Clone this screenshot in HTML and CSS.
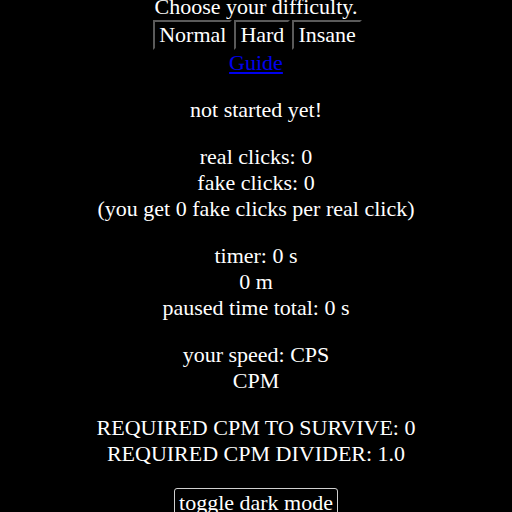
FILE: index.html
```html
<!DOCTYPE html>
<html>
<head>
<meta charset="utf-8">
<link rel="stylesheet" href="styles.css">
</head>
<body>
<main class="page">
  <div class="difficulty">
    <div class="line">Choose your difficulty.</div>
    <div class="choices">
      <button class="choice">Normal</button>
      <button class="choice">Hard</button>
      <button class="choice">Insane</button>
    </div>
    <a class="guide" href="#">Guide</a>
  </div>
  <p class="block">not started yet!</p>
  <p class="block">real clicks: 0<br>fake clicks: 0<br>(you get 0 fake clicks per real click)</p>
  <p class="block">timer: 0 s<br>0 m<br>paused time total: 0 s</p>
  <p class="block">your speed: CPS<br>CPM</p>
  <p class="block">REQUIRED CPM TO SURVIVE: 0<br>REQUIRED CPM DIVIDER: 1.0</p>
  <div class="block">
    <button class="toggle">toggle dark mode</button>
  </div>
</main>
</body>
</html>
```

FILE: styles.css
```css
html, body {
  margin: 0;
  padding: 0;
  background: #000;
}
body {
  height: 100vh;
  overflow: hidden;
}
.page {
  height: 100vh;
  display: flex;
  flex-direction: column;
  justify-content: center;
  align-items: center;
  text-align: center;
  color: #fff;
  font-family: "Liberation Serif", "Times New Roman", serif;
  font-size: 22px;
}
.difficulty {
  display: flex;
  flex-direction: column;
  align-items: center;
}
.choices {
  display: flex;
  gap: 2px;
  padding-left: 3px;
}
.choice {
  font: inherit;
  color: #fff;
  background: #000;
  border-style: solid;
  border-width: 2px;
  border-color: #5a5a5a #000 #000 #5a5a5a;
  padding: 0 4px;
  margin: 0;
}
.guide {
  color: #0000ee;
}
.block {
  margin: 21px 0 0;
}
.toggle {
  font: inherit;
  color: #fff;
  background: #000;
  border: 1px solid #d0d0d0;
  border-radius: 3px;
  padding: 1px 4px;
}
```
